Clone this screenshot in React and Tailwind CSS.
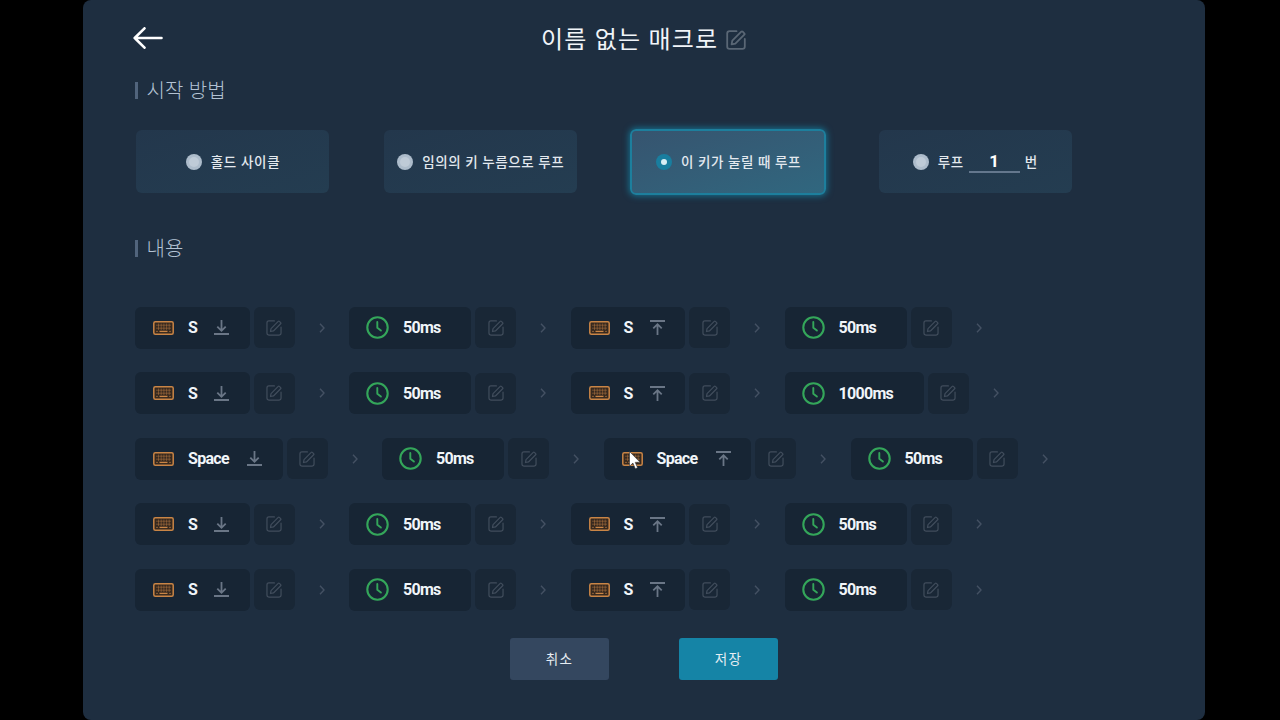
import clsx from 'clsx'

const S_ROW = [
  { type: 'key', label: 'S', dir: 'down' },
  { type: 'delay', label: '50ms' },
  { type: 'key', label: 'S', dir: 'up' },
  { type: 'delay', label: '50ms' },
]

const ROWS = [
  S_ROW,
  [...S_ROW.slice(0, 3), { type: 'delay', label: '1000ms' }],
  [
    { type: 'key', label: 'Space', dir: 'down' },
    { type: 'delay', label: '50ms' },
    { type: 'key', label: 'Space', dir: 'up' },
    { type: 'delay', label: '50ms' },
  ],
  S_ROW,
  S_ROW,
]

function EditIcon({ className }) {
  return (
    <svg viewBox="0 0 20 20" fill="none" stroke="currentColor" strokeLinejoin="round" className={className}>
      <path d="M10.5 1.2H3.6A2.4 2.4 0 0 0 1.2 3.6v12.8a2.4 2.4 0 0 0 2.4 2.4h12.8a2.4 2.4 0 0 0 2.4-2.4V9" strokeLinecap="round" />
      <path d="M5.6 14.4l.7-3.7 9-9a1 1 0 0 1 1.4 0l1.6 1.6a1 1 0 0 1 0 1.4l-9 9z" />
    </svg>
  )
}

function KeyboardIcon() {
  return (
    <svg viewBox="0 0 21 14" className="h-3.5 w-[21px] shrink-0 text-[#c98546]" fill="none" stroke="currentColor">
      <rect x="0.8" y="0.8" width="19.4" height="12.4" rx="1.5" fill="#36291f" strokeWidth="1.5" />
      <path d="M3 4.2h15M3 7.2h15M5.5 2.5v6.5M8.2 2.5v6.5M10.9 2.5v6.5M13.6 2.5v6.5M16.2 2.5v6.5" strokeWidth="0.7" opacity="0.6" />
      <path d="M6.5 10.4h8" strokeWidth="1.3" />
      <path d="M3 10.4h2M16 10.4h2" strokeWidth="1" opacity="0.6" />
    </svg>
  )
}

function ClockIcon() {
  return (
    <svg viewBox="0 0 23 23" className="size-[23px] shrink-0 text-[#34a65a]" fill="none" stroke="currentColor">
      <circle cx="11.5" cy="11.5" r="10.2" strokeWidth="2.1" />
      <path d="M11.3 6v5.8l3.6 2.8" strokeWidth="1.9" strokeLinecap="round" strokeLinejoin="round" />
    </svg>
  )
}

function PressIcon({ dir }) {
  return (
    <svg viewBox="0 0 15 15" className="size-[15px] shrink-0 text-[#6a7686]" fill="none" stroke="currentColor" strokeWidth="1.8">
      {dir === 'down' ? (
        <path d="M7.5 0v10.6M3.3 6.6l4.2 4.2 4.2-4.2M0 14h15" />
      ) : (
        <path d="M7.5 15V4.4M3.3 8.4l4.2-4.2 4.2 4.2M0 1h15" />
      )}
    </svg>
  )
}

function StepLabel({ children }) {
  return <span className="ml-3.5 pt-px text-base font-bold tracking-[-0.7px] text-[#f1f5f9]">{children}</span>
}

function Step({ step }) {
  const width = {
    S: 'w-[114.5px]',
    Space: 'w-[147.5px]',
    '50ms': 'w-[122px]',
    '1000ms': 'w-[139px]',
  }[step.label]

  return (
    <div className="flex shrink-0 items-center">
      <div
        className={clsx(
          'flex h-[42px] items-center rounded-md bg-[#172534]',
          step.type === 'key' ? 'pr-[20.5px] pl-[18px]' : 'pl-[17px]',
          width,
        )}
      >
        {step.type === 'key' ? <KeyboardIcon /> : <ClockIcon />}
        <StepLabel>{step.label}</StepLabel>
        {step.dir && (
          <span className="ml-auto">
            <PressIcon dir={step.dir} />
          </span>
        )}
      </div>
      <button type="button" className="ml-1 flex h-[41px] w-[41px] items-center justify-center rounded-md bg-[#192736]">
        <EditIcon className="size-4 stroke-[1.5] text-[#414d5c]" />
      </button>
      <span className="flex w-[54.5px] justify-center">
        <svg viewBox="0 0 6 10" className="h-2.5 w-1.5 text-[#445163]" fill="none" stroke="currentColor" strokeWidth="1.4">
          <path d="M1 0.7L5 5 1 9.3" />
        </svg>
      </span>
    </div>
  )
}

function Radio({ checked }) {
  return (
    <span
      className={clsx(
        'flex size-4 shrink-0 items-center justify-center rounded-full',
        checked ? 'bg-[#197e9f]' : 'bg-[#adbccb]',
      )}
    >
      <span className={clsx('rounded-full', checked ? 'size-1.5 bg-[#d8eef5]' : 'size-2.5 bg-[#bfcbd7]')} />
    </span>
  )
}

function Option({ checked, className, children }) {
  return (
    <div
      className={clsx(
        'flex items-center justify-center rounded-md text-[13.5px] font-medium text-[#e3e9ef]',
        checked
          ? '-mx-[1.5px] h-[66px] w-[196px] border-2 border-[#1d7f9d] bg-linear-to-br from-[#36546f] to-[#30677f] shadow-[0_0_6px_1px_#16718f]'
          : 'h-[63px] w-[193px] bg-linear-to-br from-[#23374c] to-[#243d51]',
        className,
      )}
    >
      <Radio checked={checked} />
      {children}
    </div>
  )
}

function SectionTitle({ children }) {
  return (
    <h2 className="flex h-7 items-center text-xl font-light text-[#b3c2d3]">
      <span className="mr-[8.5px] h-[17px] w-[3px] bg-[#51647c]" />
      <span className="pt-0.5 tracking-[0.2px]">{children}</span>
    </h2>
  )
}

export default function App() {
  return (
    <div className="relative h-[720px] w-[1280px] overflow-hidden bg-black pl-[83px] font-['Roboto','Noto_Sans_CJK_KR',sans-serif]">
      <main className="flex h-[720px] w-[1121.5px] flex-col rounded-lg bg-[#1e2e40] pl-[52px]">
        <header className="flex h-[76px] items-center">
          <button type="button" className="-mt-px flex w-[406px]">
            <svg viewBox="0 0 30 22" className="-ml-0.5 h-[22px] w-[30px] text-white" fill="none" stroke="currentColor" strokeWidth="2.6" strokeLinecap="round" strokeLinejoin="round">
              <path d="M11.5 1.3L1.7 11l9.8 9.7M1.7 11H28.5" />
            </svg>
          </button>
          <h1 className="mt-[3px] flex items-center text-2xl tracking-[1.2px] whitespace-nowrap text-[#f1f5f9]">
            이름 없는 매크로
            <EditIcon className="mt-px ml-[7.5px] size-5 stroke-[1.8] text-[#5a6775]" />
          </h1>
        </header>

        <SectionTitle>시작 방법</SectionTitle>

        <div className="mt-[23px] ml-px flex h-[69px] items-center gap-[54.8px]">
          <Option className="pl-px">
            <span className="ml-[9px] pt-px tracking-[0.7px]">홀드 사이클</span>
          </Option>
          <Option className="pl-px">
            <span className="ml-[9px] pt-px tracking-[0.6px]">임의의 키 누름으로 루프</span>
          </Option>
          <Option checked className="pl-px">
            <span className="ml-[9px] pt-px tracking-[0.6px]">이 키가 눌릴 때 루프</span>
          </Option>
          <Option className="pr-0.5">
            <span className="ml-[9px] w-[27px] pt-px tracking-[0.6px]">루프</span>
            <span className="mx-1 h-[23px] w-[51px] border-b-2 border-[#64778d] text-center text-[17px] leading-[23px] font-bold text-white">
              1
            </span>
            <span className="ml-px pt-px">번</span>
          </Option>
        </div>

        <div className="mt-[38px]">
          <SectionTitle>내용</SectionTitle>
        </div>

        <div className="mt-[44.5px] flex flex-col gap-[23.5px]">
          {ROWS.map((row, i) => (
            <div key={i} className="flex">
              {row.map((step, j) => (
                <Step key={j} step={step} />
              ))}
            </div>
          ))}
        </div>

        <footer className="mt-[27.5px] ml-[375px] flex gap-[70px] text-[13.5px] tracking-[1.4px] text-[#e6edf3]">
          <button type="button" className="h-[42px] w-[99px] rounded-[3px] bg-[#34475f]">취소</button>
          <button type="button" className="h-[42px] w-[99px] rounded-[3px] bg-[#1584a6]">저장</button>
        </footer>
      </main>

      {/* mouse pointer */}
      <svg viewBox="0 0 12 19" className="absolute top-[451px] left-[629px] h-[19px] w-3" fill="#fff" stroke="#2a2a2a" strokeWidth="0.6">
        <path d="M0.5 0.5v14.8l3.4-3.2 2.4 5.6 2.3-1-2.4-5.4h4.9z" />
      </svg>
    </div>
  )
}
